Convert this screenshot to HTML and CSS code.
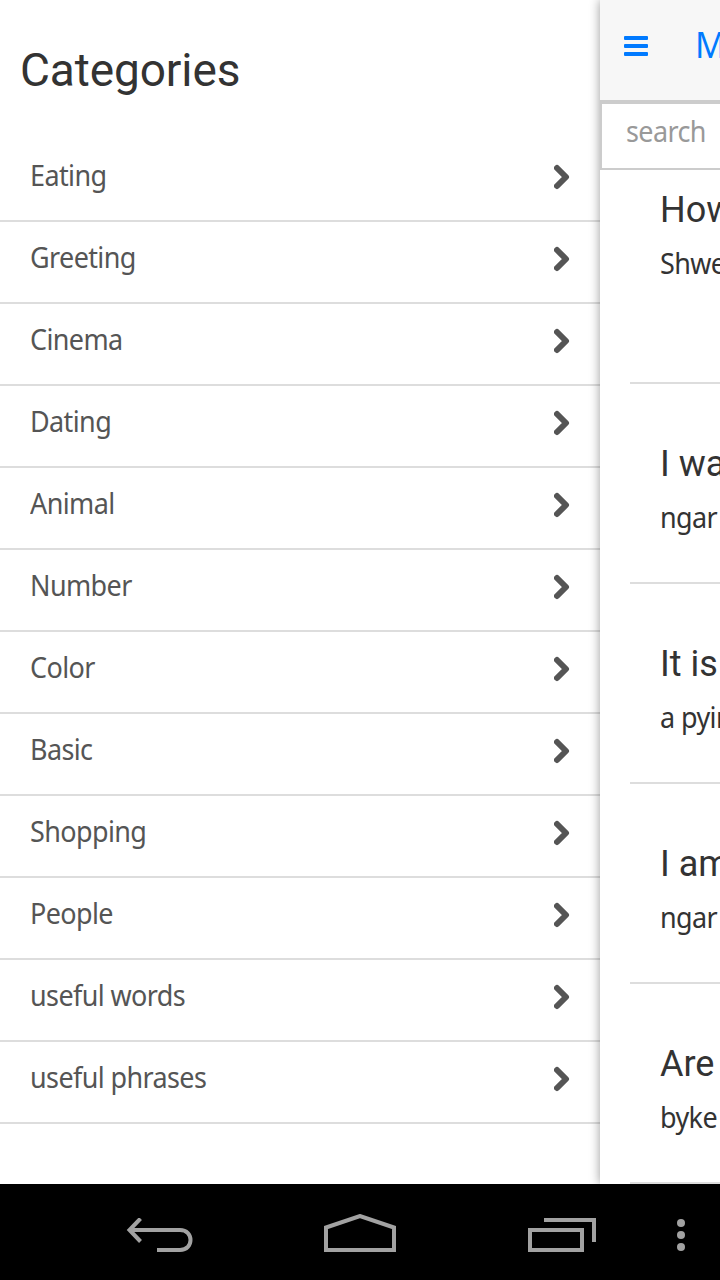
FILE: index.html
```html
<!DOCTYPE html>
<html lang="en">

<head>
	<meta charset="UTF-8">
	<meta name="viewport" content="width=device-width, initial-scale=1.0">
	<title>Categories</title>
	<link rel="stylesheet" href="styles.css">
</head>

<body>
	<svg class="defs">
		<symbol id="chevron" viewBox="0 0 16 26">
			<path d="M3 4L12 13L3 22" fill="none" stroke="#555" stroke-width="6" stroke-linecap="round" stroke-linejoin="round" />
		</symbol>
	</svg>
	<div class="app">
		<div class="menu">
			<h1>Categories</h1>
			<ul>
				<li><span>Eating</span><svg><use href="#chevron" /></svg></li>
				<li><span>Greeting</span><svg><use href="#chevron" /></svg></li>
				<li><span>Cinema</span><svg><use href="#chevron" /></svg></li>
				<li><span>Dating</span><svg><use href="#chevron" /></svg></li>
				<li><span>Animal</span><svg><use href="#chevron" /></svg></li>
				<li><span>Number</span><svg><use href="#chevron" /></svg></li>
				<li><span>Color</span><svg><use href="#chevron" /></svg></li>
				<li><span>Basic</span><svg><use href="#chevron" /></svg></li>
				<li><span>Shopping</span><svg><use href="#chevron" /></svg></li>
				<li><span>People</span><svg><use href="#chevron" /></svg></li>
				<li><span>useful words</span><svg><use href="#chevron" /></svg></li>
				<li><span>useful phrases</span><svg><use href="#chevron" /></svg></li>
			</ul>
		</div>
		<div class="page">
			<div class="bar">
				<div class="toggle"><i></i><i></i><i></i></div>
				<span class="title">M</span>
			</div>
			<div class="search"><span>search</span></div>
			<ul class="phrases">
				<li class="first">
					<h2>How</h2>
					<p>Shwe</p>
				</li>
				<li>
					<h2>I wa</h2>
					<p>ngar</p>
				</li>
				<li>
					<h2>It is</h2>
					<p>a pyin</p>
				</li>
				<li>
					<h2>I am</h2>
					<p>ngar</p>
				</li>
				<li>
					<h2>Are</h2>
					<p>byke</p>
				</li>
			</ul>
		</div>
	</div>
	<div class="nav">
		<svg class="back" width="68" height="36" viewBox="0 0 68 36">
			<path d="M4 12H54C68 12 68 32 54 32H31" />
			<path d="M14.500 0.500L3.500 12L14.500 23.500" />
		</svg>
		<svg class="home" width="72" height="38" viewBox="0 0 72 38">
			<path d="M2 36V13.500L36 2L70 13.500V36Z" />
		</svg>
		<svg class="recent" width="68" height="34" viewBox="0 0 68 34">
			<path d="M2 12H54V32H2Z" />
			<path d="M16 2H66V24" />
		</svg>
		<div class="more"><i></i><i></i><i></i></div>
	</div>
</body>

</html>
```
FILE: styles.css
```css
* {
	padding: 0;
	margin: 0;
	list-style: none;
	box-sizing: border-box;
}

body {
	width: 720px;
	height: 1280px;
	overflow: hidden;
	background: #fff;
	font-family: "Noto Sans", sans-serif;
	color: #333;
}

.defs {
	display: none;
}

.app {
	display: flex;
	height: 1184px;
	overflow: hidden;
}

.menu {
	flex: 0 0 600px;
}

.menu h1 {
	height: 140px;
	padding-left: 20px;
	line-height: 140px;
	font-family: Roboto, sans-serif;
	font-size: 46px;
	font-weight: normal;
	letter-spacing: -0.1px;
}

.menu li {
	display: flex;
	align-items: center;
	justify-content: space-between;
	height: 82px;
	padding: 0 30px;
	border-bottom: 2px solid #ddd;
	color: #555;
}

/* slightly condensed text */
.menu li span,
.search span,
.phrases p {
	font-size: 29px;
	letter-spacing: -0.65px;
	transform: scaleX(0.93);
	transform-origin: 0 0;
}

.menu li span {
	line-height: 40px;
	padding-bottom: 10px;
}

.menu li svg {
	width: 16px;
	height: 26px;
	margin-top: -6px;
}

.page {
	position: relative;
	flex: 0 0 120px;
	height: 1184px;
	background: #fff;
	box-shadow: 0 0 10px rgba(0, 0, 0, 0.4);
	clip-path: inset(0 0 0 -20px);
}

.bar {
	display: flex;
	align-items: center;
	height: 102px;
	padding: 0 0 10px 24px;
	background: #f7f7f7;
	border-bottom: 2px solid #ccc;
	overflow: hidden;
}

.toggle {
	display: flex;
	flex: none;
	flex-direction: column;
	gap: 4px;
	width: 24px;
	margin-top: 2px;
}

.toggle i {
	height: 4px;
	border-radius: 1px;
	background: #007aff;
}

.title {
	margin-left: 47px;
	color: #007aff;
	font-size: 36px;
	line-height: 50px;
	transform: scaleX(0.95);
	transform-origin: 0 0;
}

.search {
	height: 68px;
	padding-left: 24px;
	border: 2px solid #ccc;
	border-right: 0;
	color: #999;
	line-height: 54px;
}

.search span {
	display: inline-block;
}

.phrases li {
	height: 200px;
	margin-left: 30px;
	padding: 55px 0 0 30px;
	border-bottom: 2px solid #ddd;
	overflow: hidden;
	white-space: nowrap;
}

.phrases .first {
	height: 214px;
	padding-top: 15px;
}

.phrases h2 {
	font-family: Roboto, sans-serif;
	font-size: 36px;
	font-weight: normal;
	line-height: 50px;
}

.phrases p {
	line-height: 56px;
}

.nav {
	display: flex;
	height: 96px;
	background: #000;
}

.nav path {
	fill: none;
	stroke: #a2a2a2;
	stroke-width: 4;
}

.back {
	margin: 34px 0 0 126px;
}

.home {
	margin: 30px 0 0 130px;
}

.recent {
	margin: 34px 0 0 132px;
}

.more {
	display: flex;
	flex-direction: column;
	gap: 4px;
	margin: 35px 0 0 81px;
}

.more i {
	width: 8px;
	height: 8px;
	border-radius: 50%;
	background: #a2a2a2;
}
```
